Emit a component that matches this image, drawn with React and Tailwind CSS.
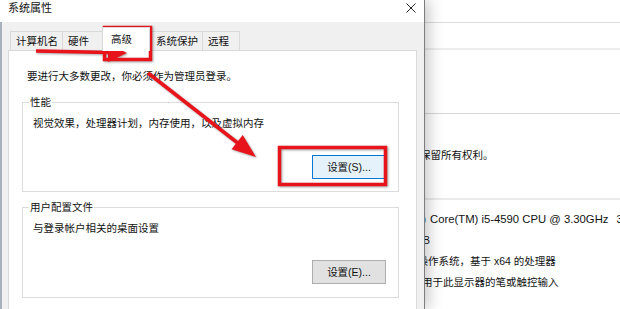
import React from 'react';

const tabs = [
    { label: '计算机名', w: 'w-[52px]' },
    { label: '硬件', w: 'w-[40px]' },
    { label: '高级', w: 'w-[48px]', active: true },
    { label: '系统保护', w: 'w-[52px]' },
    { label: '远程', w: 'w-[38px]', last: true },
];

function GroupBox({ title, text, button, primary, height, top }) {
    return (
        <div className={`relative ml-[13px] w-[377px] border border-[#dcdcdc] ${height} ${top}`}>
            <span className="absolute -top-[8px] left-[6px] bg-white px-[1px] leading-[14px]">{title}</span>
            <div className="pl-[10px] pt-[13px] leading-[14px]">{text}</div>
            <div className="flex justify-end pr-[12px] mt-[25px]">
                <button
                    className={
                        primary
                            ? 'w-[74px] h-[24px] border border-[#0078d7] bg-[#e5f1fb] leading-[14px]'
                            : 'w-[74px] h-[24px] border border-[#adadad] bg-[#e1e1e1] leading-[14px]'
                    }
                >
                    {button}
                </button>
            </div>
        </div>
    );
}

export default function App() {
    return (
        <div className="relative w-[620px] h-[309px] overflow-hidden bg-white text-[10.5px] text-[#111] font-['Liberation_Sans','Noto_Sans_CJK_SC',sans-serif]">
            {/* Page behind the dialog */}
            <div className="absolute inset-0 whitespace-nowrap">
                <div className="h-[23px] border-b border-[#dcdcdc]" />
                <div className="h-[27px] border-b-2 border-[#ededed]" />
                <div className="h-[64px] border-b border-[#d6d6d6]" />
                <div className="flex h-[14px] mt-[34px] leading-[14px]">
                    <span className="w-[420px] shrink-0 text-right">© 2018 Microsoft Corporation。</span>
                    <span>保留所有权利。</span>
                </div>
                <div className="h-[38px] border-b-2 border-[#ebebeb]" />
                <div className="mt-[9px]">
                    <div className="flex h-[21px] items-center text-[11.3px]">
                        <span className="w-[426px] shrink-0 text-right">Intel(R)</span>
                        <span className="ml-[4px]">Core(TM) i5-4590 CPU @ 3.30GHz</span>
                        <span className="ml-[8px]">3.30 GHz</span>
                    </div>
                    <div className="flex h-[21px] items-center">
                        <span className="w-[423px] shrink-0 text-right">8.00 G</span>
                        <span>B</span>
                    </div>
                    <div className="flex h-[21px] items-center">
                        <span className="w-[428px] shrink-0 text-right">64 位操</span>
                        <span>作系统，基于 x64 的处理器</span>
                    </div>
                    <div className="flex h-[21px] items-center">
                        <span className="w-[422px] shrink-0 text-right">没有可</span>
                        <span>用于此显示器的笔或触控输入</span>
                    </div>
                </div>
            </div>

            {/* Dialog window */}
            <div className="absolute left-0 top-0 w-[425px] h-[309px] flex flex-col bg-[#f0f0f0] border-r border-[#7d7d7d] shadow-[4px_0_14px_rgba(0,0,0,0.22)]">
                <div className="h-[22px] shrink-0 bg-white flex justify-between pl-[8px] pr-[8px] pt-[1px]">
                    <span className="text-[11px] leading-[14px]">系统属性</span>
                    <svg width="10" height="10" viewBox="0 0 10 10" className="mt-[2px]">
                        <path d="M0.5 0.5 L9.5 9.5 M9.5 0.5 L0.5 9.5" stroke="#222" strokeWidth="1" />
                    </svg>
                </div>

                <div className="flex-1 flex flex-col border-l-2 border-[#a7b1bb] pl-[6px] pr-[7px] pt-[9px]">
                    {/* Tabs */}
                    <div className="flex h-[19px] items-end pl-[2px]">
                        {tabs.map((t) =>
                            t.active ? (
                                <div
                                    key={t.label}
                                    className={`${t.w} relative z-10 -mb-px h-[24px] flex items-center pl-[8px] pb-[2px] bg-white border-l border-t border-r border-[#d9d9d9] leading-[14px]`}
                                >
                                    {t.label}
                                </div>
                            ) : (
                                <div
                                    key={t.label}
                                    className={`${t.w} h-[19px] flex items-center pl-[5px] border-l border-t border-[#d9d9d9] leading-[14px] ${t.last ? 'border-r' : ''}`}
                                >
                                    {t.label}
                                </div>
                            )
                        )}
                    </div>

                    {/* Panel */}
                    <div className="flex-1 bg-white border border-[#d9d9d9] border-b-0">
                        <div className="pl-[18px] mt-[18px] leading-[14px]">要进行大多数更改，你必须作为管理员登录。</div>
                        <GroupBox
                            title="性能"
                            text="视觉效果，处理器计划，内存使用，以及虚拟内存"
                            button="设置(S)..."
                            primary
                            height="h-[90px]"
                            top="mt-[19px]"
                        />
                        <GroupBox
                            title="用户配置文件"
                            text="与登录帐户相关的桌面设置"
                            button="设置(E)..."
                            height="h-[91px]"
                            top="mt-[15px]"
                        />
                    </div>
                </div>
            </div>

            {/* Red annotations */}
            <svg
                className="absolute inset-0 pointer-events-none drop-shadow-[1px_1px_1px_rgba(0,0,0,0.35)]"
                width="620"
                height="309"
                viewBox="0 0 620 309"
            >
                <rect x="104.5" y="27.5" width="46" height="32" fill="none" stroke="#e8141b" strokeWidth="3.5" />
                <rect x="279.5" y="147.5" width="106" height="37" fill="none" stroke="#e8141b" strokeWidth="3.5" />
                <line x1="36" y1="51" x2="110" y2="52.5" stroke="#e8141b" strokeWidth="3.5" />
                <polygon points="108,43.5 127,53 108,62" fill="#e8141b" />
                <line x1="148" y1="73" x2="239" y2="144" stroke="#e8141b" strokeWidth="3.5" />
                <polygon points="231.5,149.3 256,157 242.7,135.1" fill="#e8141b" />
            </svg>
        </div>
    );
}
